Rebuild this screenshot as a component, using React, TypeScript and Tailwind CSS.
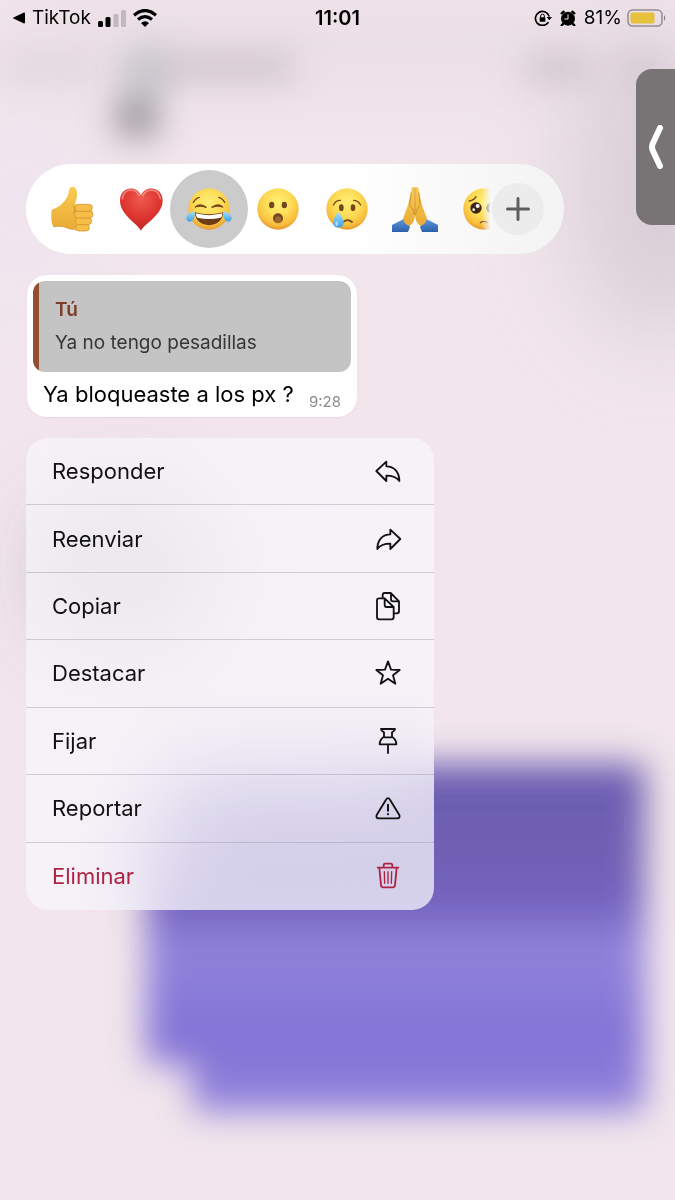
import { useState } from "react";
import type { ReactNode } from "react";
import clsx from "clsx";

const Backdrop = () => (
  <svg
    className="absolute inset-0 -z-10 h-full w-full"
    viewBox="0 0 675 1200"
    preserveAspectRatio="none"
    aria-hidden="true"
  >
    <defs>
      <filter id="soft" x="-50%" y="-100%" width="200%" height="300%">
        <feGaussianBlur stdDeviation="17" />
      </filter>
      <filter id="softer" x="-100%" y="-100%" width="300%" height="300%">
        <feGaussianBlur stdDeviation="45" />
      </filter>
      <linearGradient id="chat" gradientUnits="userSpaceOnUse" x1="0" y1="760" x2="0" y2="1120">
        <stop offset="0" stopColor="#6a5bb0" />
        <stop offset="0.3" stopColor="#7161b5" />
        <stop offset="0.41" stopColor="#7464c2" />
        <stop offset="0.52" stopColor="#9284da" />
        <stop offset="0.65" stopColor="#897bd9" />
        <stop offset="0.78" stopColor="#8272d6" />
        <stop offset="1" stopColor="#9486dc" />
      </linearGradient>
    </defs>
    <rect width="675" height="1200" fill="#f2e6ec" />
    <g filter="url(#softer)">
      <ellipse cx="660" cy="190" rx="90" ry="150" fill="#c9bfca" opacity="0.6" />
      <ellipse cx="20" cy="200" rx="60" ry="110" fill="#efe4ef" />
      <ellipse cx="125" cy="570" rx="70" ry="60" fill="#6f6f6c" opacity="0.6" />
      <rect x="0" y="20" width="675" height="45" fill="#d8cdd4" opacity="0.5" />
    </g>
    <g filter="url(#soft)">
      <rect x="0" y="58" width="95" height="18" fill="#cfc5cb" opacity="0.6" />
      <rect x="120" y="56" width="175" height="22" fill="#b9b0b7" opacity="0.75" />
      <rect x="125" y="45" width="45" height="50" fill="#c2c5cb" opacity="0.8" />
      <rect x="117" y="97" width="40" height="40" fill="#8a868c" opacity="0.9" />
      <rect x="525" y="56" width="65" height="24" fill="#bdb3b9" opacity="0.7" />
      <rect x="620" y="56" width="40" height="24" fill="#bdb3b9" opacity="0.5" />
      <path d="M180 775H375V764H645V1112H192V1064H146V860Z" fill="url(#chat)" />
    </g>
  </svg>
);

const StatusBar = () => (
  <header className="grid grid-cols-[1fr_auto_1fr] items-center px-3 pt-1 text-[19px] leading-7 text-black">
    <div className="flex items-center gap-[7px]">
      <a href="#tiktok" className="flex items-center gap-[7px]">
        <svg className="h-3 w-[13px]" viewBox="0 0 12 12" preserveAspectRatio="none" aria-hidden="true">
          <path d="M0.5 6 11 0.5Q12 0.3 12 1.500V10.500Q12 11.700 11 11.500Z" />
        </svg>
        TikTok
      </a>
      <svg className="h-[17px] w-7" viewBox="0 0 28 17" role="img" aria-label="Signal">
        <rect x="0" y="11" width="5" height="6" rx="1.5" />
        <rect x="7.5" y="7" width="5" height="10" rx="1.5" />
        <rect x="15.5" y="4" width="5" height="13" rx="1.5" fill="#c1b8bf" />
        <rect x="23" y="0" width="5" height="17" rx="1.5" fill="#c1b8bf" />
      </svg>
      <svg className="h-[18px] w-6" viewBox="0 0 24 18" role="img" aria-label="Wi-Fi">
        <g fill="none" stroke="#000" strokeWidth="3.2">
          <path d="M1 6.2Q12 -3.2 23 6.2" />
          <path d="M5 10.5Q12 4.6 19 10.5" />
        </g>
        <path d="M12 18 8 14Q12 10.5 16 14Z" />
      </svg>
    </div>
    <time className="text-xl leading-7 font-semibold">11:01</time>
    <div className="-mr-1 flex items-center justify-end gap-2">
      <svg className="h-4 w-[18px]" viewBox="0 0 54 48" role="img" aria-label="Rotation lock">
        <path
          d="M42 38A21 21 0 1 1 45 18"
          fill="none"
          stroke="#000"
          strokeWidth="5"
          strokeLinecap="round"
        />
        <path d="M38 21H54L46 31Z" />
        <rect x="17" y="22" width="17" height="13" rx="2" />
        <path d="M20 23V18a5.500 5.500 0 0 1 11 0V23" fill="none" stroke="#000" strokeWidth="3" />
      </svg>
      <svg className="h-4 w-4" viewBox="0 0 48 48" role="img" aria-label="Alarm">
        <circle cx="24" cy="26" r="21" />
        <path
          d="M5 10 11 5M43 10 37 5M10 41 5 46M38 41 43 46"
          stroke="#000"
          strokeWidth="7"
          strokeLinecap="round"
        />
        <path d="M24 13V27H13" fill="none" stroke="#f2e6ec" strokeWidth="3" />
      </svg>
      <div className="flex items-center gap-[5px]">
        <span>81%</span>
        <svg className="h-[18px] w-10" viewBox="0 0 40 18" role="img" aria-label="Battery">
          <rect
            x="1"
            y="1"
            width="34"
            height="16"
            rx="4.500"
            fill="none"
            stroke="#948b97"
            strokeWidth="1.5"
          />
          <rect x="3.500" y="3.500" width="24" height="11" rx="2" fill="#e6c13c" />
          <path d="M37 6Q39.500 9 37 12Z" fill="#857d88" />
        </svg>
      </div>
    </div>
  </header>
);

const EmojiDefs = () => (
  <svg className="absolute h-0 w-0" aria-hidden="true">
    <defs>
      <radialGradient id="face" cx="0.5" cy="0.35" r="0.66">
        <stop offset="0" stopColor="#ffef76" />
        <stop offset="0.5" stopColor="#fddb55" />
        <stop offset="0.82" stopColor="#f7bd3d" />
        <stop offset="1" stopColor="#e3942b" />
      </radialGradient>
      <linearGradient id="skin" x1="0" y1="0" x2="0" y2="1">
        <stop offset="0" stopColor="#fbcb51" />
        <stop offset="1" stopColor="#e9ab35" />
      </linearGradient>
      <radialGradient id="heart" cx="0.5" cy="0.25" r="0.75">
        <stop offset="0" stopColor="#ef5a4e" />
        <stop offset="0.6" stopColor="#dd352e" />
        <stop offset="1" stopColor="#b92524" />
      </radialGradient>
      <linearGradient id="tear" x1="0" y1="0" x2="0" y2="1">
        <stop offset="0" stopColor="#a5e0fb" />
        <stop offset="1" stopColor="#3f9fe6" />
      </linearGradient>
      <linearGradient id="sleeve" x1="0" y1="0" x2="0" y2="1">
        <stop offset="0" stopColor="#5e9be0" />
        <stop offset="1" stopColor="#2d60ab" />
      </linearGradient>
      <linearGradient id="fade" x1="0" y1="0" x2="1" y2="0">
        <stop offset="0.44" stopColor="#fff" />
        <stop offset="0.64" stopColor="#000" />
      </linearGradient>
      <mask id="fadeOut" maskUnits="userSpaceOnUse" x="0" y="0" width="138" height="138">
        <rect width="138" height="138" fill="url(#fade)" />
      </mask>
    </defs>
  </svg>
);

const Face = () => <circle cx="69" cy="69" r="62" fill="url(#face)" />;

const ThumbsUp = () => (
  <>
    <path
      d="M8 71Q22 67 34 58Q55 39 59 20Q60 3 70 2Q84 3 84 24Q84 39 78 53L84 59V128Q70 132 54 126Q40 118 12 122Q4 98 8 71Z"
      fill="url(#skin)"
    />
    <path d="M12 122Q40 118 54 126Q70 132 86 132" fill="none" stroke="#cf902d" strokeWidth="2" />
    <g fill="#f5be48" stroke="#cc8c29" strokeWidth="2">
      <rect x="80" y="114" width="41" height="21" rx="10" />
      <rect x="79" y="94" width="49" height="22" rx="11" />
      <rect x="77" y="74" width="55" height="22" rx="11" />
      <rect x="78" y="55" width="52" height="21" rx="10" />
    </g>
    <path d="M72 60Q80 67 74 82" fill="none" stroke="#d9982d" strokeWidth="3" />
  </>
);

const Heart = () => (
  <>
    <path
      d="M69 134C61 115 6 86 6 44C6 1 57-4 69 28C81-4 134 1 134 44C134 86 77 115 69 134Z"
      fill="url(#heart)"
    />
    <path
      d="M13 38Q17 13 38 12Q56 12 63 29M75 29Q82 12 102 12Q122 14 127 38"
      fill="none"
      stroke="#f9b1a2"
      strokeWidth="5"
      strokeLinecap="round"
      opacity="0.65"
    />
  </>
);

const Joy = () => (
  <>
    <Face />
    <path
      d="M22 49Q30 36 40 34M116 49Q108 36 98 34"
      fill="none"
      stroke="#75451b"
      strokeWidth="4"
      strokeLinecap="round"
    />
    <path
      d="M28 63Q43 50 60 64Q43 57 28 63ZM78 64Q95 50 110 63Q95 57 78 64Z"
      fill="#75451b"
      stroke="#75451b"
      strokeWidth="4"
      strokeLinejoin="round"
    />
    <path d="M26 79Q69 91 112 79Q108 115 69 118Q30 115 26 79Z" fill="#6e3b18" />
    <path d="M29 82Q69 93 109 82Q108 94 104 95Q69 103 34 95Q30 92 29 82Z" fill="#fff" />
    <g fill="url(#tear)">
      <path d="M26 75Q28 101 16 106Q3 110 1 97Q0 83 26 75Z" />
      <path d="M112 75Q110 101 122 106Q135 110 137 97Q138 83 112 75Z" />
    </g>
  </>
);

const Wow = () => (
  <>
    <Face />
    <g fill="#75451b">
      <ellipse cx="50" cy="57" rx="8" ry="10" />
      <ellipse cx="88" cy="57" rx="8" ry="10" />
      <ellipse cx="69" cy="97" rx="15" ry="15" />
    </g>
    <ellipse cx="69" cy="101" rx="10" ry="10" fill="#9b6534" />
  </>
);

const Cry = () => (
  <>
    <Face />
    <g fill="none" stroke="#75451b" strokeWidth="4" strokeLinecap="round">
      <path d="M28 57Q36 42 49 43M89 43Q102 43 110 57" />
      <path d="M58 108Q70 97 84 108" strokeWidth="5" />
    </g>
    <ellipse cx="52" cy="65" rx="7" ry="10" fill="#75451b" />
    <ellipse cx="87" cy="65" rx="7" ry="10" fill="#75451b" />
    <path d="M43 78Q27 98 27 110A16 15 0 0 0 59 110Q59 98 43 78Z" fill="url(#tear)" />
    <ellipse cx="38" cy="113" rx="4" ry="7" fill="#d3f2ff" opacity="0.7" />
  </>
);

const Pray = () => (
  <>
    <path
      d="M0 117Q25 105 38 97L54 123L48 138H0ZM138 117Q113 105 100 97L84 123L90 138H138Z"
      fill="url(#sleeve)"
    />
    <path d="M68 4Q58 0 58 13L48 58Q40 79 33 98Q38 117 53 119Q70 108 69 80Z" fill="url(#skin)" />
    <path d="M70 4Q80 0 80 13L90 58Q98 79 105 98Q100 117 85 119Q68 108 69 80Z" fill="url(#skin)" />
    <path
      d="M69 5V88M58 20L53 58Q64 66 67 86M80 20L85 58Q74 66 71 86"
      fill="none"
      stroke="#c88a2b"
      strokeWidth="2.5"
    />
  </>
);

const Pleading = () => (
  <g mask="url(#fadeOut)">
    <Face />
    <path
      d="M25 45Q40 42 45 32M93 32Q98 42 113 45"
      fill="none"
      stroke="#75451b"
      strokeWidth="4"
      strokeLinecap="round"
    />
    <circle cx="45" cy="66" r="17" fill="#3f2614" />
    <circle cx="93" cy="66" r="17" fill="#3f2614" />
    <circle cx="50" cy="60" r="6" fill="#fff" />
    <circle cx="38" cy="71" r="4" fill="#fff" />
    <circle cx="98" cy="60" r="6" fill="#fff" />
    <path d="M58 110Q69 102 80 110" fill="none" stroke="#75451b" strokeWidth="4" strokeLinecap="round" />
  </g>
);

const reactions = [
  { label: "Me gusta", Art: ThumbsUp },
  { label: "Corazón", Art: Heart },
  { label: "Risa", Art: Joy },
  { label: "Asombro", Art: Wow },
  { label: "Llanto", Art: Cry },
  { label: "Gracias", Art: Pray },
  { label: "Ternura", Art: Pleading },
];

const ReactionBar = () => {
  const [selected, setSelected] = useState(2);

  return (
    <div className="flex w-fit items-center rounded-full bg-linear-to-r from-white from-60% to-[#f3f3f3] py-[6px] pr-5 pl-3">
      <EmojiDefs />
      <div className="grid w-[480px] grid-cols-7">
        {reactions.map(({ label, Art }, i) => (
          <button
            key={label}
            type="button"
            aria-label={label}
            aria-pressed={selected === i}
            onClick={() => setSelected(i)}
            className="flex h-[78px] items-center justify-center"
          >
            <span
              className={clsx(
                "-mx-2 flex size-[78px] shrink-0 items-center justify-center rounded-full",
                selected === i && "bg-[#cbcbcb]"
              )}
            >
              <svg className="size-[46px]" viewBox="0 0 138 138" aria-hidden="true">
                <Art />
              </svg>
            </span>
          </button>
        ))}
      </div>
      <button
        type="button"
        aria-label="Más reacciones"
        className="z-10 -ml-[26px] flex size-[52px] items-center justify-center rounded-full bg-[#ececec]"
      >
        <svg className="size-6" viewBox="0 0 24 24" aria-hidden="true">
          <path d="M12 1.500V22.500M1.500 12H22.500" stroke="#5e5e5e" strokeWidth="3" strokeLinecap="round" />
        </svg>
      </button>
    </div>
  );
};

const Message = () => (
  <article className="ml-px w-fit min-w-[330px] rounded-[20px] bg-white px-[6px] pt-[6px] pb-[5px] shadow-xs">
    <blockquote className="flex overflow-hidden rounded-xl bg-[#c4c4c4]">
      <div className="w-[6px] bg-[#934d30]" />
      <div className="px-4 py-[13px] text-[19px]">
        <p className="leading-8 font-semibold text-[#7d3c28]">Tú</p>
        <p className="leading-[33px] text-[#363636]">Ya no tengo pesadillas</p>
      </div>
    </blockquote>
    <div className="flex items-end justify-between gap-3 px-[10px] pt-1">
      <p className="text-[22px] leading-9 text-black">Ya bloqueaste a los px ?</p>
      <time className="text-[15px] leading-5 text-[#8b8b8b]">9:28</time>
    </div>
  </article>
);

const ReplyArrow = () => (
  <path d="M10 45 40 17V31C64 31 79 49 79 75C70 62 58 59 40 59V75Z" />
);

const menuItems: { label: string; icon: ReactNode; danger?: boolean }[] = [
  { label: "Responder", icon: <ReplyArrow /> },
  {
    label: "Reenviar",
    icon: (
      <g transform="matrix(-1 0 0 1 92 0)">
        <ReplyArrow />
      </g>
    ),
  },
  {
    label: "Copiar",
    icon: (
      <>
        <path d="M35 22H18a6 6 0 0 0-6 6v51a6 6 0 0 0 6 6h38a6 6 0 0 0 6-6V48L35 22V42a6 6 0 0 0 6 6H62" />
        <path d="M29 21V12a6 6 0 0 1 6-6H53L78 31V61a6 6 0 0 1-6 6H63M54 7V25a6 6 0 0 0 6 6H78" />
      </>
    ),
  },
  {
    label: "Destacar",
    icon: <path d="M45 10 54 35 80 36 60 52 67 77 45 62 23 77 30 52 10 36 36 35Z" />,
  },
  {
    label: "Fijar",
    icon: (
      <>
        <path d="M24 9H66Q65 15 57 19V32Q70 40 70 55H20Q20 40 33 32V19Q25 15 24 9ZM35 34H55" />
        <path d="M45 56V81" />
      </>
    ),
  },
  {
    label: "Reportar",
    icon: (
      <>
        <path d="M39 20Q45 11 51 20L79 66Q82 76 73 76H17Q8 76 11 66Z" />
        <path d="M45 35V53M45 63V64" strokeWidth="6" />
      </>
    ),
  },
  {
    label: "Eliminar",
    danger: true,
    icon: (
      <>
        <path d="M14 20H76M32 19V13a5 5 0 0 1 5-5H53a5 5 0 0 1 5 5V19M19 20 24 73Q25 79 31 79H59Q65 79 66 73L71 20" />
        <path d="M34 32 35 67M45 32V67M56 32 55 67" strokeWidth="4" />
      </>
    ),
  },
];

const ContextMenu = () => (
  <nav
    aria-label="Opciones del mensaje"
    className="grid min-h-[472px] w-full max-w-[408px] auto-rows-fr divide-y divide-[#97909c]/40 overflow-hidden rounded-[22px] bg-[#f7f6fb]/75 backdrop-blur-2xl"
  >
    {menuItems.map(({ label, icon, danger }) => (
      <button
        key={label}
        type="button"
        className={clsx(
          "flex items-center justify-between pr-[31px] pl-[26px] text-left text-[22px] leading-7",
          danger ? "text-[#ae2343]" : "text-[#111]"
        )}
      >
        {label}
        <svg
          className="size-[30px]"
          viewBox="0 0 90 90"
          fill="none"
          stroke="currentColor"
          strokeWidth="5.500"
          strokeLinecap="round"
          strokeLinejoin="round"
          aria-hidden="true"
        >
          {icon}
        </svg>
      </button>
    ))}
  </nav>
);

const App = () => {
  return (
    <div className="relative isolate min-h-screen overflow-hidden font-['Inter',sans-serif]">
      <Backdrop />
      <StatusBar />
      <button
        type="button"
        aria-label="Abrir panel"
        className="absolute top-[69px] right-0 flex h-[156px] w-[39px] items-center justify-center rounded-l-2xl bg-[#787375]"
      >
        <svg className="h-11 w-4" viewBox="0 0 16 44" aria-hidden="true">
          <path
            d="M12 3 5 18Q3 22 5 26L12 41"
            fill="none"
            stroke="#fff"
            strokeWidth="6"
            strokeLinecap="round"
            strokeLinejoin="round"
          />
        </svg>
      </button>
      <main className="flex flex-col gap-[21px] px-[26px] pt-[132px]">
        <ReactionBar />
        <Message />
        <ContextMenu />
      </main>
    </div>
  );
};

export default App;
